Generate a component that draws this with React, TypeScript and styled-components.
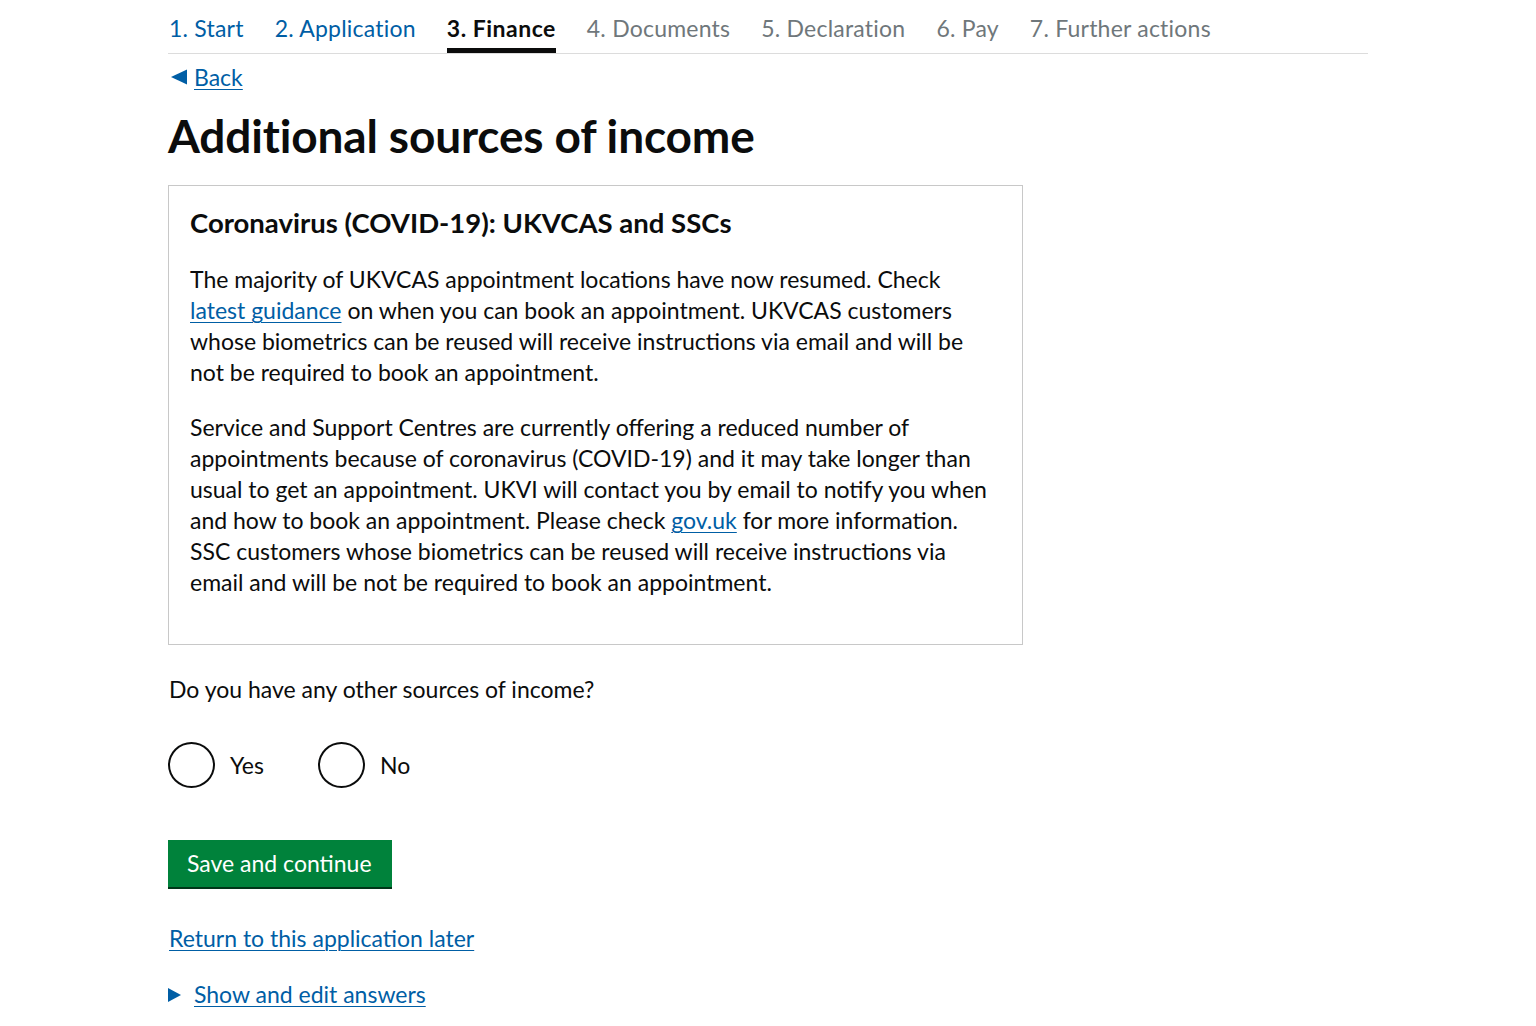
import React from "react";
import styled, { createGlobalStyle } from "styled-components";

const GlobalStyle = createGlobalStyle`
  html, body { margin: 0; padding: 0; background: #ffffff; }
  body {
    font-family: Lato, "Noto Sans", Arial, sans-serif;
    color: #0b0c0c;
    -webkit-font-smoothing: antialiased;
  }
  * { box-sizing: border-box; }
`;

const Page = styled.div`
  width: 1200px;
  margin: 0 auto;
  padding-bottom: 40px;
`;

const StepNav = styled.nav`
  display: flex;
  gap: 31px;
  border-bottom: 1px solid #dcdcdc;
  padding-left: 1px;
`;

type StepState = "done" | "active" | "todo";

const Step = styled.a<{ $state: StepState }>`
  display: block;
  font-size: 23px;
  line-height: 28px;
  padding: 14px 0 6px;
  border-bottom: 5px solid ${(p) => (p.$state === "active" ? "#0b0c0c" : "transparent")};
  font-weight: ${(p) => (p.$state === "active" ? 700 : 400)};
  letter-spacing: ${(p) => (p.$state === "active" ? "0.5px" : "0.22px")};
  color: ${(p) =>
    p.$state === "done" ? "#005ea5" : p.$state === "active" ? "#0b0c0c" : "#6f777b"};
  text-decoration: none;
  white-space: nowrap;
`;

const BackLink = styled.a`
  display: inline-flex;
  align-items: center;
  gap: 7px;
  margin-top: 9px;
  margin-left: 3px;
  font-size: 23px;
  line-height: 28px;
  color: #005ea5;
  text-decoration: underline;
  text-decoration-thickness: 1px;
  text-underline-offset: 3px;
`;

const Arrow = styled.svg`
  flex: none;
  display: block;
`;

const Title = styled.h1`
  margin: 20px 0 0;
  font-size: 46px;
  line-height: 50px;
  font-weight: 700;
  letter-spacing: -0.15px;
`;

const Notice = styled.section`
  width: 855px;
  margin-top: 24px;
  border: 1px solid #c8c8c8;
  padding: 21px 20px 22px 21px;
`;

const NoticeTitle = styled.h2`
  margin: 0 0 25px;
  font-size: 27.5px;
  line-height: 32px;
  font-weight: 700;
`;

const Para = styled.p`
  margin: 0 0 24px;
  font-size: 23px;
  line-height: 31px;
`;

const InlineLink = styled.a`
  color: #005ea5;
  text-decoration: underline;
  text-decoration-thickness: 1px;
  text-underline-offset: 3px;
`;

const Fieldset = styled.fieldset`
  margin: 29px 0 0;
  padding: 0;
  border: 0;
`;

const Legend = styled.legend`
  padding: 0 0 0 1px;
  font-size: 23px;
  line-height: 31px;
`;

const RadioRow = styled.div`
  display: flex;
  gap: 54px;
  margin-top: 37px;
`;

const RadioLabel = styled.label`
  display: flex;
  align-items: center;
  gap: 15px;
  font-size: 23px;
  line-height: 31px;
  cursor: pointer;
`;

const RadioCircle = styled.span`
  display: block;
  width: 47px;
  height: 46px;
  border: 2px solid #0b0c0c;
  border-radius: 50%;
  background: #ffffff;
`;

const Button = styled.button`
  display: block;
  margin-top: 52px;
  height: 47px;
  padding: 0 20px 0 19px;
  border: 0;
  border-radius: 0;
  background: #00823b;
  box-shadow: 0 2px 0 #003618;
  color: #ffffff;
  font-family: Lato, "Noto Sans", Arial, sans-serif;
  font-size: 23px;
  line-height: 47px;
  cursor: pointer;
`;

const SaveLater = styled.a`
  display: inline-block;
  margin-top: 36px;
  margin-left: 1px;
  font-size: 23px;
  line-height: 31px;
  color: #005ea5;
  text-decoration: underline;
  text-decoration-thickness: 1px;
  text-underline-offset: 3px;
`;

const Details = styled.div`
  display: flex;
  align-items: center;
  gap: 13px;
  margin-top: 25px;
`;

const DetailsLink = styled.a`
  font-size: 23px;
  line-height: 31px;
  color: #005ea5;
  text-decoration: underline;
  text-decoration-thickness: 1px;
  text-underline-offset: 3px;
`;

const steps: { label: string; state: StepState }[] = [
  { label: "1. Start", state: "done" },
  { label: "2. Application", state: "done" },
  { label: "3. Finance", state: "active" },
  { label: "4. Documents", state: "todo" },
  { label: "5. Declaration", state: "todo" },
  { label: "6. Pay", state: "todo" },
  { label: "7. Further actions", state: "todo" },
];

export default function App() {
  return (
    <>
      <GlobalStyle />
      <Page>
        <StepNav>
          {steps.map((s) => (
            <Step key={s.label} $state={s.state} href="#">
              {s.label}
            </Step>
          ))}
        </StepNav>

        <BackLink href="#">
          <Arrow width="16" height="16" viewBox="0 0 16 16" aria-hidden="true">
            <path d="M0 8 L16 0.5 L16 15.5 Z" fill="#005ea5" />
          </Arrow>
          Back
        </BackLink>

        <Title>Additional sources of income</Title>

        <Notice>
          <NoticeTitle>Coronavirus (COVID-19): UKVCAS and SSCs</NoticeTitle>
          <Para>
            The majority of UKVCAS appointment locations have now resumed. Check
            <br />
            <InlineLink href="#">latest guidance</InlineLink> on when you can book an appointment. UKVCAS customers
            <br />
            whose biometrics can be reused will receive instructions via email and will be
            <br />
            not be required to book an appointment.
          </Para>
          <Para>
            Service and Support Centres are currently offering a reduced number of
            <br />
            appointments because of coronavirus (COVID-19) and it may take longer than
            <br />
            usual to get an appointment. UKVI will contact you by email to notify you when
            <br />
            and how to book an appointment. Please check <InlineLink href="#">gov.uk</InlineLink> for more information.
            <br />
            SSC customers whose biometrics can be reused will receive instructions via
            <br />
            email and will be not be required to book an appointment.
          </Para>
        </Notice>

        <Fieldset>
          <Legend>Do you have any other sources of income?</Legend>
          <RadioRow>
            <RadioLabel>
              <RadioCircle />
              Yes
            </RadioLabel>
            <RadioLabel>
              <RadioCircle />
              No
            </RadioLabel>
          </RadioRow>
        </Fieldset>

        <Button type="button">Save and continue</Button>

        <SaveLater href="#">Return to this application later</SaveLater>

        <Details>
          <svg width="13" height="14" viewBox="0 0 13 14" aria-hidden="true">
            <path d="M0 0 L13 7 L0 14 Z" fill="#005ea5" />
          </svg>
          <DetailsLink href="#">Show and edit answers</DetailsLink>
        </Details>
      </Page>
    </>
  );
}
